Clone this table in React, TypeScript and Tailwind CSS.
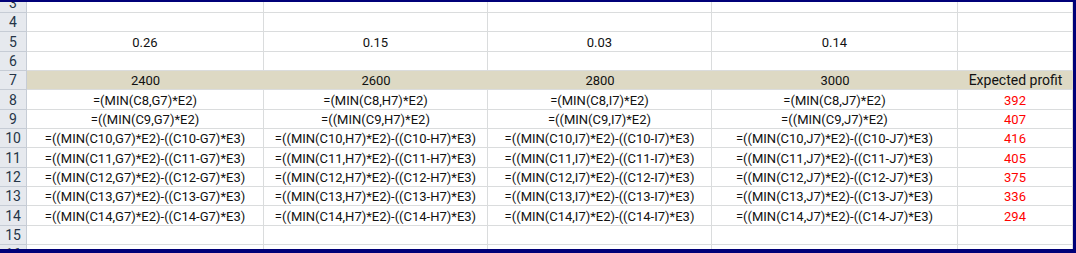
const GRID = "border-[#dadcdd]";

type Row = { n: number; h: string; cells: string[]; tan?: boolean; crop?: boolean };

function formula(r: number, col: string) {
  if (r === 8) return `=(MIN(C8,${col}7)*E2)`;
  if (r === 9) return `=((MIN(C9,${col}7)*E2)`;
  return `=((MIN(C${r},${col}7)*E2)-((C${r}-${col}7)*E3)`;
}

const profits: Record<number, string> = { 8: "392", 9: "407", 10: "416", 11: "405", 12: "375", 13: "336", 14: "294" };

const rows: Row[] = [
  { n: 3, h: "h-[11px]", cells: ["", "", "", "", ""], crop: true },
  { n: 4, h: "h-[19px]", cells: ["", "", "", "", ""] },
  { n: 5, h: "h-[20px]", cells: ["0.26", "0.15", "0.03", "0.14", ""] },
  { n: 6, h: "h-[19px]", cells: ["", "", "", "", ""] },
  { n: 7, h: "h-[19px]", cells: ["2400", "2600", "2800", "3000", "Expected profit"], tan: true },
  ...[8, 9, 10, 11, 12, 13, 14].map((r, i) => ({
    n: r,
    h: ["h-[20px]", "h-[19px]", "h-[19px]", "h-[20px]", "h-[19px]", "h-[19px]", "h-[20px]"][i],
    cells: [formula(r, "G"), formula(r, "H"), formula(r, "I"), formula(r, "J"), profits[r]],
  })),
  { n: 15, h: "h-[19px]", cells: ["", "", "", "", ""] },
  { n: 16, h: "h-[4px]", cells: ["", "", "", "", ""] },
];

const widths = ["w-[237px]", "w-[224px]", "w-[224px]", "w-[246px]", "w-[115px]"];

function SheetRow({ row }: { row: Row }) {
  const tall = row.h === "h-[20px]";
  return (
    <div className={`flex ${row.h} overflow-hidden ${row.crop ? "items-end" : "items-start"}`}>
      <div
        className={`flex ${tall ? "h-[20px]" : "h-[19px]"} w-[27px] shrink-0 items-end justify-center border-r border-b border-[#c6ccd5] bg-[#e6e9ee] pb-[1px] text-[14px] leading-[16px] text-[#253547]`}
      >
        {row.n}
      </div>
      {widths.map((w, i) => {
        const text = row.cells[i] ?? "";
        const red = i === 4 && row.n >= 8;
        const label = text === "Expected profit";
        return (
          <div
            key={i}
            className={`flex ${tall ? "h-[20px]" : "h-[19px]"} ${w} shrink-0 items-end justify-center overflow-hidden whitespace-nowrap pb-[1px] leading-[15px] ${
              label ? "text-[14px]" : "text-[13px]"
            } ${row.tan ? "bg-[#ddd9c4] border-b border-[#dadcdd]" : `border-r border-b ${GRID}`} ${
              red ? "text-[#ff0000]" : "text-[#111]"
            }`}
          >
            {text}
          </div>
        );
      })}
    </div>
  );
}

export default function App() {
  return (
    <div
      className="h-[253px] w-[1076px] overflow-hidden border-t-2 border-r-[3px] border-b-4 border-[#000078] bg-white"
      style={{ fontFamily: "Roboto, 'Liberation Sans', sans-serif" }}
    >
      <div className="flex flex-col">
        {rows.map((r) => (
          <SheetRow key={r.n} row={r} />
        ))}
      </div>
    </div>
  );
}
